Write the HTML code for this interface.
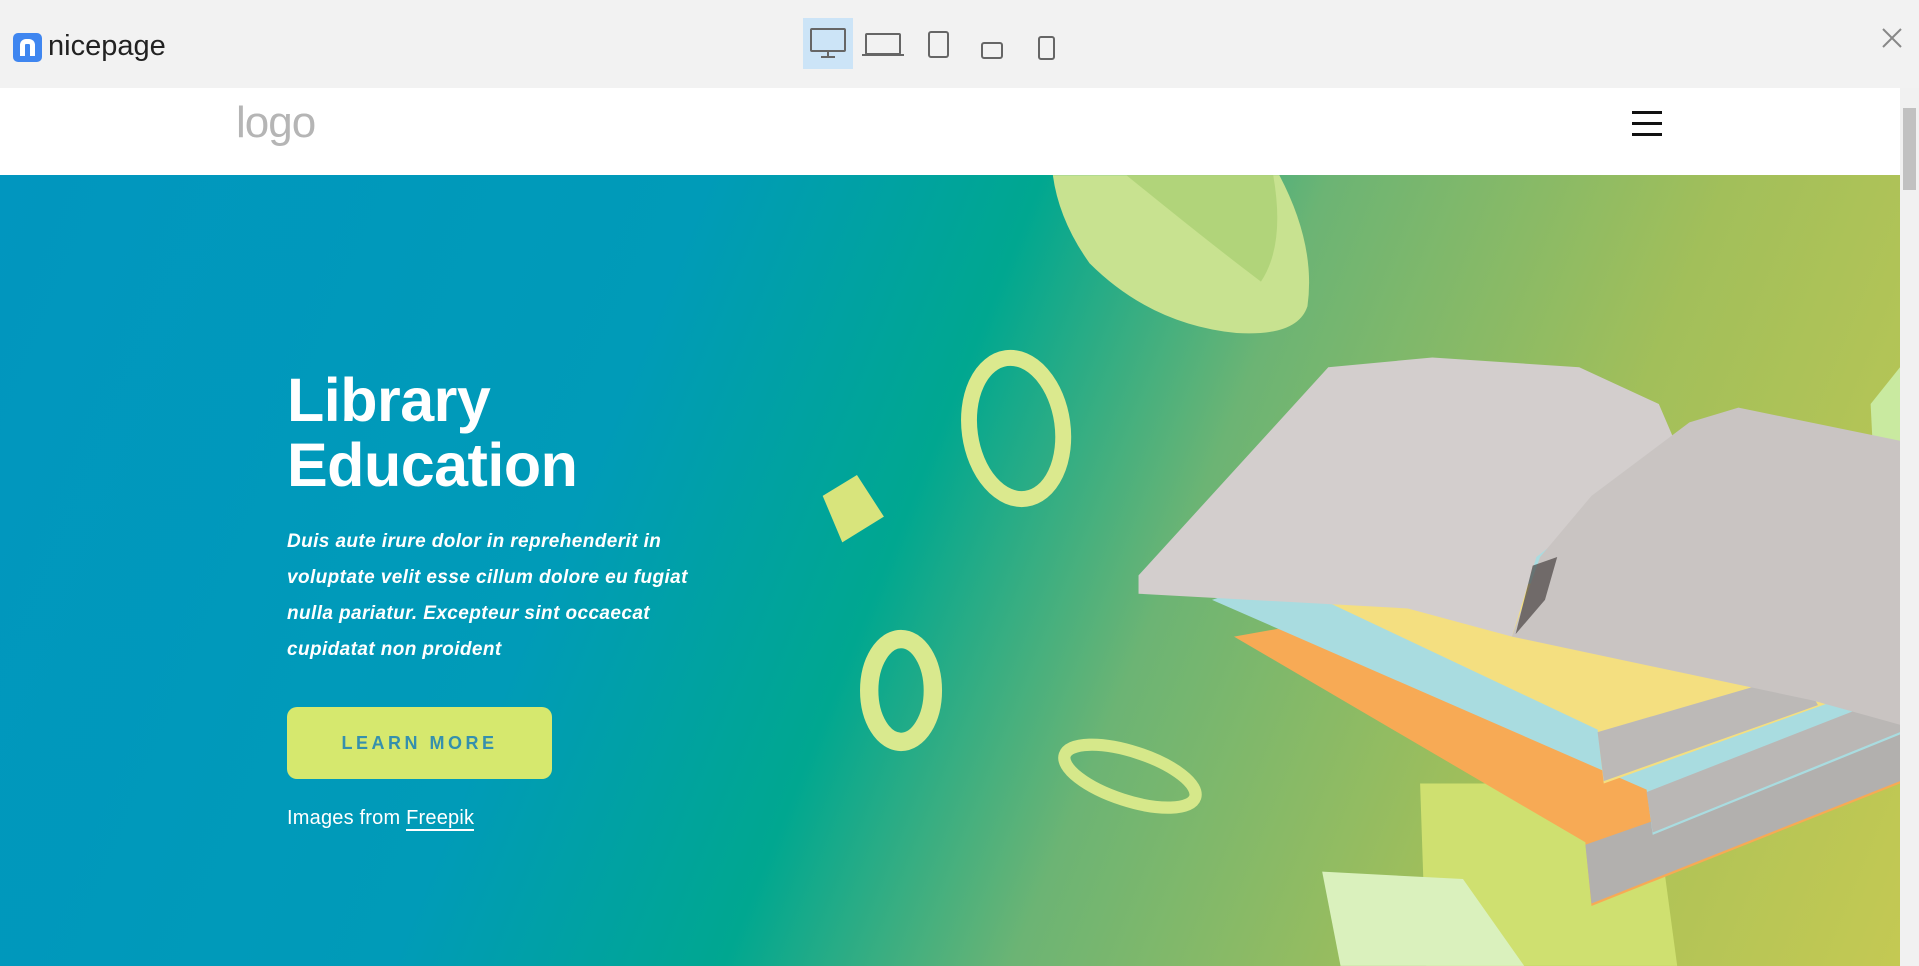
<!DOCTYPE html>
<html><head><meta charset="utf-8"><style>
*{margin:0;padding:0;box-sizing:border-box}
body{width:1919px;height:966px;overflow:hidden;background:#f2f2f2;font-family:"Liberation Sans",sans-serif;position:relative}
.top{position:absolute;left:0;top:0;width:1919px;height:88px;background:#f2f2f2}
.hdr{position:absolute;left:0;top:88px;width:1900px;height:87px;background:#fff}
.sb{position:absolute;left:1900px;top:88px;width:19px;height:878px;background:#f1f1f1}
.hero{position:absolute;left:0;top:175px;width:1900px;height:791px;background:linear-gradient(112deg,#0196bf 0%,#009bb8 32%,#00a790 47%,#6cb474 60%,#a2bf5a 78%,#c4c953 100%);overflow:hidden}
h1{position:absolute;left:287px;color:#fff;font-size:61px;line-height:65px;font-weight:bold;letter-spacing:-0.5px}
.p{position:absolute;left:287px;width:440px;color:#fff;font-size:19px;line-height:36px;font-weight:bold;font-style:italic;letter-spacing:0.4px}
.btn{position:absolute;left:287px;width:265px;height:72px;background:#d6e86e;border-radius:10px;color:#3590ad;font-weight:bold;font-size:18px;letter-spacing:3.5px;text-align:center;line-height:72px}
.img{position:absolute;left:287px;color:#fff;font-size:20px;letter-spacing:0.2px}
.img span{border-bottom:2px solid #fff}
</style></head><body>
<div class="top">
 <div style="position:absolute;left:13px;top:33px;width:29px;height:29px;background:#3f86f0;border-radius:5px"></div>
 <div style="position:absolute;left:20px;top:39px;width:15px;height:17px;border:5px solid #fff;border-bottom:none;border-radius:6px 6px 0 0"></div>
 <div style="position:absolute;left:48px;top:30px;font-size:29px;color:#222;letter-spacing:0px">nicepage</div>
 <div style="position:absolute;left:803px;top:18px;width:50px;height:51px;background:#cce4f7"></div>
 <svg style="position:absolute;left:800px;top:18px" width="280" height="51" viewBox="0 0 280 51" fill="none" stroke="#666" stroke-width="2">
  <rect x="11" y="11" width="34" height="22" rx="1"/><path d="M28 33v5M21 39h14"/>
  <rect x="66" y="16" width="34" height="20" rx="1"/><path d="M62 37h42"/>
  <rect x="129" y="14" width="19" height="25" rx="2"/>
  <rect x="182" y="25" width="20" height="15" rx="2"/>
  <rect x="239" y="19" width="15" height="22" rx="2"/>
 </svg>
 <svg style="position:absolute;left:1882px;top:28px" width="20" height="20" stroke="#888" stroke-width="2"><path d="M1 1L19 19M19 1L1 19"/></svg>
</div>
<div class="hdr">
 <div style="position:absolute;left:236px;top:10px;font-size:44px;color:#b5b5b5;letter-spacing:-1px">logo</div>
 <div style="position:absolute;left:1632px;top:23px;width:30px;height:3px;background:#111;box-shadow:0 11px 0 #111,0 22px 0 #111"></div>
</div>
<div class="sb"><div style="position:absolute;left:3px;top:20px;width:13px;height:82px;background:#c1c1c1"></div></div>
<div class="hero">
<svg width="1900" height="791" viewBox="0 143 1552 646" style="position:absolute;left:0;top:0">
 <path d="M860 143L1045 143Q1075 200 1068 250Q1060 275 1010 272Q940 265 890 215Q865 180 860 143Z" fill="#c8e290"/>
 <path d="M920 143L1040 143Q1050 200 1030 230Q990 200 920 143Z" fill="#a6cf70" opacity=".7"/>
 <path d="M1160 640L1350 640L1370 789L1165 789Z" fill="#cfe070"/>
 <path d="M1080 712L1195 718L1245 789L1095 789Z" fill="#daf1bd"/>
 <path d="M1528 330L1552 300L1552 400L1530 370Z" fill="#c9eaa0"/>
 <ellipse cx="830" cy="350" rx="38" ry="58" fill="none" stroke="#dbe98e" stroke-width="13" transform="rotate(-8 830 350)"/>
 <ellipse cx="736" cy="564" rx="26" ry="42" fill="none" stroke="#d9e98e" stroke-width="15"/>
 <ellipse cx="923" cy="634" rx="56" ry="20" fill="none" stroke="#d6e88a" stroke-width="10" transform="rotate(18 923 634)"/>
 <path d="M672 405L700 388L722 422L688 443Z" fill="#d8e47c"/>
 <path d="M1008 520L1295 688L1300 740L1552 640L1552 590L1290 470Z" fill="#f7aa55"/>
 <path d="M1295 690L1300 738L1552 638L1552 600Z" fill="#b2b0ae"/>
 <path d="M990 490L1345 645L1350 682L1552 600L1552 555L1200 420Z" fill="#a9dce0"/>
 <path d="M1345 647L1350 680L1552 598L1552 566Z" fill="#bab7b5"/>
 <path d="M1070 485L1305 596L1310 640L1500 572L1400 470Z" fill="#f4df80"/>
 <path d="M1305 598L1310 638L1485 576L1470 550Z" fill="#bcb9b7"/>
 <path d="M930 470L1085 300L1170 292L1290 300L1355 330L1370 365L1255 455L1235 520L1150 497L930 485Z" fill="#d3cecd"/>
 <path d="M1235 520L1258 455L1300 405L1380 345L1420 333L1552 360L1552 592L1480 572Z" fill="#c9c4c2"/>
 <path d="M1238 518L1252 462L1272 455L1262 490Z" fill="#4a4443" opacity=".7"/>
</svg>
<h1 style="top:193px">Library<br>Education</h1>
<div class="p" style="top:349px">Duis aute irure dolor in reprehenderit in voluptate velit esse cillum dolore eu fugiat nulla pariatur. Excepteur sint occaecat cupidatat non proident</div>
<div class="btn" style="top:532px">LEARN MORE</div>
<div class="img" style="top:632px">Images from <span>Freepik</span></div>
</div>
</body></html>
